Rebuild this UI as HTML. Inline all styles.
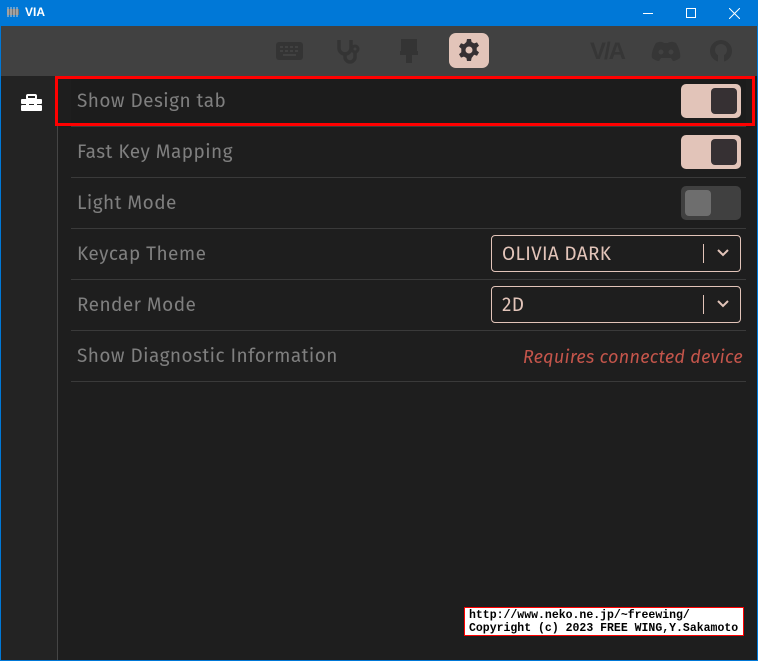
<!DOCTYPE html>
<html><head><style>
*{margin:0;padding:0;box-sizing:border-box}
body{width:758px;height:661px;overflow:hidden;background:#0078d7;font-family:"Fira Sans","Liberation Sans",sans-serif;position:relative}
.title{position:absolute;left:0;top:0;width:758px;height:26px;background:#0078d7;color:#fff}
.win{position:absolute;left:1px;top:26px;width:756px;height:634px;background:#1e1e1e}
.tool{position:absolute;left:0;top:0;width:756px;height:50px;background:#414141}
.side{position:absolute;left:0;top:50px;width:57px;height:584px;background:#232323;border-right:1px solid #454545}
.row{position:absolute;left:70px;width:675px;height:51px;border-bottom:1px solid #3a3a3a;color:#7f7f7f;font-size:19px;line-height:52px;padding-left:6px;letter-spacing:0.45px}
.tog{position:absolute;right:5px;top:8px;width:60px;height:34px;border-radius:5px;background:#e2c4b9}
.tog i{position:absolute;right:4px;top:4px;width:26px;height:26px;border-radius:4px;background:#363033}
.tog.off{background:#404040}.tog.off i{left:4px;right:auto;background:#6e6e6e}
.dd{position:absolute;right:5px;top:6px;width:250px;height:37px;border:1px solid #e2c4b9;border-radius:4px;color:#e2c4b9;font-size:19px;line-height:37px;padding-left:10px;letter-spacing:0.3px}
.dd b{position:absolute;right:36px;top:8px;width:1px;height:19px;background:#e2c4b9}
.dd svg{position:absolute;right:11px;top:13px}
</style></head><body>
<div class="title">
<svg style="position:absolute;left:6px;top:7px" width="14" height="10"><rect x="1" y="2" width="12" height="6" fill="#777"/><g stroke="#ccc"><line x1="2" y1="0" x2="2" y2="10"/><line x1="5" y1="0" x2="5" y2="10"/><line x1="8" y1="0" x2="8" y2="10"/><line x1="11" y1="0" x2="11" y2="10"/></g></svg>
<span style="position:absolute;left:25px;top:5px;font:bold 12px 'Liberation Sans',sans-serif">VIA</span>
<div style="position:absolute;left:643px;top:13px;width:10px;height:1px;background:#fff"></div>
<div style="position:absolute;left:686px;top:8px;width:10px;height:10px;border:1px solid #fff"></div>
<svg style="position:absolute;left:729px;top:8px" width="11" height="11"><path d="M0 0L11 11M11 0L0 11" stroke="#fff"/></svg>
</div>
<div class="win">
<div class="tool">
<svg style="position:absolute;left:275px;top:15px" width="27" height="20"><rect x="0" y="1" width="27" height="18" rx="3" fill="#343434"/><g fill="#414141"><rect x="4" y="5" width="3" height="2"/><rect x="9" y="5" width="3" height="2"/><rect x="14" y="5" width="3" height="2"/><rect x="19" y="5" width="3" height="2"/><rect x="4" y="9" width="3" height="2"/><rect x="9" y="9" width="3" height="2"/><rect x="14" y="9" width="3" height="2"/><rect x="19" y="9" width="3" height="2"/><rect x="7" y="13" width="13" height="2"/></g></svg>
<svg style="position:absolute;left:335px;top:12px" width="26" height="26"><path d="M3 2v8a6 6 0 0 0 12 0V2M9 16v3a5 5 0 0 0 10 0v-5" stroke="#343434" stroke-width="3.5" fill="none"/><circle cx="19" cy="11" r="3" stroke="#343434" stroke-width="3" fill="none"/></svg>
<svg style="position:absolute;left:399px;top:12px" width="18" height="26"><rect x="1" y="1" width="16" height="12" fill="#343434"/><rect x="0" y="13" width="18" height="4" fill="#343434"/><rect x="6" y="17" width="6" height="8" fill="#343434"/></svg>
<div style="position:absolute;left:448px;top:7px;width:40px;height:35px;border-radius:7px;background:#e2c4b9"></div>
<svg style="position:absolute;left:456px;top:12px" width="24" height="24" viewBox="0 0 24 24"><path fill="#363033" d="M10 1h4l.6 3 2.5 1.4 2.9-1 2 3.4-2.3 2v2.6l2.3 2-2 3.4-2.9-1L14.6 20 14 23h-4l-.6-3-2.5-1.4-2.9 1-2-3.4 2.3-2V10.6L2 8.6l2-3.4 2.9 1L9.4 4z"/><circle cx="12" cy="12" r="3.5" fill="#e2c4b9"/></svg>
<div style="position:absolute;left:589px;top:12px;font:bold 24px 'Liberation Sans',sans-serif;color:#363636;letter-spacing:-2px">V/A</div>
<svg style="position:absolute;left:650px;top:15px" width="30" height="20"><path d="M5 2c4-2 7-1 8 0h4c1-1 4-2 8 0 3 5 5 11 4 15-3 2-5 3-7 3l-2-3h-10l-2 3c-2 0-4-1-7-3C0 13 2 7 5 2z" fill="#363636"/><circle cx="10" cy="11" r="2.5" fill="#414141"/><circle cx="20" cy="11" r="2.5" fill="#414141"/></svg>
<svg style="position:absolute;left:707px;top:12px" width="26" height="26"><circle cx="13" cy="13" r="11" fill="#363636"/><circle cx="13" cy="12" r="6" fill="#414141"/><rect x="10" y="16" width="6" height="9" fill="#414141"/></svg>
</div>
<div class="side">
<svg style="position:absolute;left:20px;top:18px" width="21" height="18"><rect x="6" y="1" width="9" height="4" rx="1" stroke="#fff" stroke-width="2" fill="none"/><rect x="0" y="5" width="21" height="5" rx="1" fill="#fff"/><rect x="0" y="11" width="21" height="6" rx="1" fill="#fff"/><rect x="5" y="9" width="3" height="3" fill="#fff"/><rect x="13" y="9" width="3" height="3" fill="#fff"/></svg>
</div>
<div class="row" style="top:50px;background:#1c1c1c">Show Design tab<div class="tog"><i></i></div></div>
<div style="position:absolute;left:54px;top:50px;width:700px;height:50px;border:3px solid #f00"></div>
<div class="row" style="top:101px">Fast Key Mapping<div class="tog"><i></i></div></div>
<div class="row" style="top:152px">Light Mode<div class="tog off"><i></i></div></div>
<div class="row" style="top:203px">Keycap Theme<div class="dd">OLIVIA DARK<b></b><svg width="12" height="8"><path d="M1 1l5 5 5-5" stroke="#e2c4b9" stroke-width="2" fill="none"/></svg></div></div>
<div class="row" style="top:254px">Render Mode<div class="dd">2D<b></b><svg width="12" height="8"><path d="M1 1l5 5 5-5" stroke="#e2c4b9" stroke-width="2" fill="none"/></svg></div></div>
<div class="row" style="top:305px">Show Diagnostic Information<span style="position:absolute;right:3px;color:#c4554b;font-style:italic;font-size:18px;letter-spacing:0.3px">Requires connected device</span></div>
<div style="position:absolute;left:463px;top:581px;width:280px;height:29px;background:#fff;border:1px solid #f00;font:bold 11.5px/13px 'Liberation Mono',monospace;color:#000;padding:1px 0 0 4px;white-space:nowrap">http://www.neko.ne.jp/~freewing/<br>Copyright (c) 2023 FREE WING,Y.Sakamoto</div>
</div>
</body></html>
